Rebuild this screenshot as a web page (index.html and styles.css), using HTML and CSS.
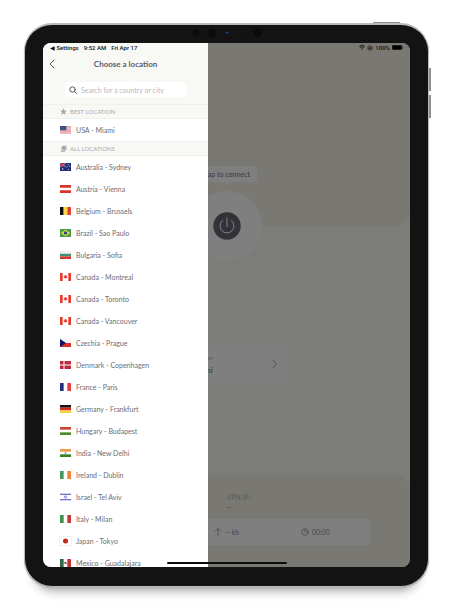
FILE: index.html
```html
<!DOCTYPE html>
<html lang="en">
<head>
<meta charset="utf-8">
<meta name="viewport" content="width=device-width, initial-scale=1">
<title>Choose a location</title>
<link rel="stylesheet" href="styles.css">
</head>
<body>
<div class="device">
  <span class="side-key side-key-top"></span>
  <span class="side-key side-key-up"></span>
  <span class="side-key side-key-down"></span>
  <svg class="cameras" viewBox="0 0 70 10" aria-hidden="true">
    <circle cx="4" cy="5" r="3.500"/><circle cx="19.500" cy="5" r="4.300"/><circle cx="66" cy="5" r="4.300"/>
    <path class="lens" d="M33.500 4h3v1.500h-3z"/><circle cx="50" cy="5" r="1"/>
  </svg>
  <div class="screen">
    <main class="home">
      <section class="hero">
        <p class="bubble">Tap to connect</p>
        <button class="power" aria-label="Connect">
          <svg viewBox="0 0 28 28"><circle class="disc" cx="14" cy="14" r="13.700"/><path d="M14 6v8.500M9.500 8.500a7 7 0 1 0 9 0"/></svg>
        </button>
      </section>
      <section class="middle">
        <button class="current">
          <span class="current-text"><small>Location</small><strong>Miami</strong></span>
          <svg viewBox="0 0 6 10"><path d="M1 1.500l3.500 3.500L1 8.500"/></svg>
        </button>
      </section>
      <section class="summary">
        <dl class="address">
          <dt>VPN IP:</dt>
          <dd>--</dd>
        </dl>
        <div class="stats">
          <span class="upload"><svg viewBox="0 0 8 8"><path d="M4 7.500v-7M1.200 3.200L4 .5l2.800 2.700"/></svg>-- kb</span>
          <span><svg viewBox="0 0 8 8"><circle cx="4" cy="4" r="3.300"/><path d="M4 1.800V4h1.800"/></svg>00:00</span>
        </div>
      </section>
    </main>

    <aside class="drawer">
      <header class="drawer-head">
        <div class="title-row">
          <button class="back" aria-label="Back"><svg viewBox="0 0 6 10"><path d="M5 1L1 5l4 4"/></svg></button>
          <h1>Choose a location</h1>
        </div>
        <label class="search">
          <svg viewBox="0 0 8 8"><circle cx="3.500" cy="3.500" r="2.700"/><path d="M5.500 5.500l2 2"/></svg>
          <input type="search" placeholder="Search for a country or city" aria-label="Search for a country or city">
        </label>
      </header>
      <h2><svg viewBox="0 0 8 8"><path d="M4 .3l1.100 2.500 2.600.3-1.900 1.800.5 2.700L4 6.300 1.700 7.600l.5-2.700L.3 3.100l2.600-.3z"/></svg>Best location</h2>
      <ul>
        <li><button><svg class="flag" viewBox="0 0 33 24"><path fill="#f2dddd" d="M0 0h33v24H0z"/><path stroke="#dd8288" stroke-width="2" d="M0 1h33M0 5h33M0 9h33M0 13h33M0 17h33M0 21h33"/><path fill="#3f507e" d="M0 0h19v13H0z"/></svg>USA - Miami</button></li>
      </ul>
      <h2><svg viewBox="0 0 8 8"><path d="M4.500.6a3 3 0 0 1 1.200 5.200A3 3 0 0 1 1.600 2.200L3 1.500z"/><path class="line" d="M6.500.8a4 4 0 0 1-1 5.700 4 4 0 0 1-4.600-.3M2 7.500h3"/></svg>All locations</h2>
      <ul>
        <li><button><svg class="flag" viewBox="0 0 33 24"><path fill="#202a75" d="M0 0h33v24H0z"/><path stroke="#d9c4d4" stroke-width="2" d="M0 0l17 12M17 0L0 12"/><path stroke="#d94a58" stroke-width="3" d="M8.500 0v12M0 6h17"/><g fill="#fff"><circle cx="8" cy="18" r="2"/><circle cx="25" cy="5" r="1.500"/><circle cx="25" cy="19" r="1.500"/><circle cx="21" cy="11" r="1.500"/><circle cx="29" cy="10" r="1.500"/></g></svg>Australia - Sydney</button></li>
        <li><button><svg class="flag" viewBox="0 0 33 24"><path fill="#fff" d="M0 0h33v24H0z"/><path fill="#d9352b" d="M0 0h33v8H0zM0 16h33v8H0z"/></svg>Austria - Vienna</button></li>
        <li><button><svg class="flag" viewBox="0 0 33 24"><path fill="#111" d="M0 0h11v24H0z"/><path fill="#f9d949" d="M11 0h11v24H11z"/><path fill="#e63a3d" d="M22 0h11v24H22z"/></svg>Belgium - Brussels</button></li>
        <li><button><svg class="flag" viewBox="0 0 33 24"><path fill="#4a9b42" d="M0 0h33v24H0z"/><path fill="#f5dc45" d="M16.500 2L30 12l-13.500 10L3 12z"/><circle fill="#29498c" cx="16.500" cy="12" r="5.500"/></svg>Brazil - Sao Paulo</button></li>
        <li><button><svg class="flag" viewBox="0 0 33 24"><path fill="#f1f1f1" d="M0 0h33v8H0z"/><path fill="#3f9270" d="M0 8h33v8H0z"/><path fill="#c93a2b" d="M0 16h33v8H0z"/></svg>Bulgaria - Sofia</button></li>
        <li><button><svg class="flag" viewBox="0 0 33 24"><path fill="#fff" d="M0 0h33v24H0z"/><path fill="#e8392b" d="M0 0h8v24H0zM25 0h8v24h-8zM16.500 5l2 3 2-.5-.5 3 3 .5-3 4-3 .5v3h-1v-3l-3-.5-3-4 3-.5-.5-3 2 .5z"/></svg>Canada - Montreal</button></li>
        <li><button><svg class="flag" viewBox="0 0 33 24"><path fill="#fff" d="M0 0h33v24H0z"/><path fill="#e8392b" d="M0 0h8v24H0zM25 0h8v24h-8zM16.500 5l2 3 2-.5-.5 3 3 .5-3 4-3 .5v3h-1v-3l-3-.5-3-4 3-.5-.5-3 2 .5z"/></svg>Canada - Toronto</button></li>
        <li><button><svg class="flag" viewBox="0 0 33 24"><path fill="#fff" d="M0 0h33v24H0z"/><path fill="#e8392b" d="M0 0h8v24H0zM25 0h8v24h-8zM16.500 5l2 3 2-.5-.5 3 3 .5-3 4-3 .5v3h-1v-3l-3-.5-3-4 3-.5-.5-3 2 .5z"/></svg>Canada - Vancouver</button></li>
        <li><button><svg class="flag" viewBox="0 0 33 24"><path fill="#f4f4f4" d="M0 0h33v12H0z"/><path fill="#d92e24" d="M0 12h33v12H0z"/><path fill="#12146b" d="M0 0l18 12L0 24z"/></svg>Czechia - Prague</button></li>
        <li><button><svg class="flag" viewBox="0 0 33 24"><path fill="#be2b3e" d="M0 0h33v24H0z"/><path stroke="#fff" stroke-width="3" d="M12 0v24M0 12h33"/></svg>Denmark - Copenhagen</button></li>
        <li><button><svg class="flag" viewBox="0 0 33 24"><path fill="#fff" d="M0 0h33v24H0z"/><path fill="#20327f" d="M0 0h11v24H0z"/><path fill="#e43c41" d="M22 0h11v24H22z"/></svg>France - Paris</button></li>
        <li><button><svg class="flag" viewBox="0 0 33 24"><path fill="#111" d="M0 0h33v8H0z"/><path fill="#d3291c" d="M0 8h33v8H0z"/><path fill="#f7d046" d="M0 16h33v8H0z"/></svg>Germany - Frankfurt</button></li>
        <li><button><svg class="flag" viewBox="0 0 33 24"><path fill="#fff" d="M0 0h33v24H0z"/><path fill="#ca4832" d="M0 0h33v8H0z"/><path fill="#4d8c2b" d="M0 16h33v8H0z"/></svg>Hungary - Budapest</button></li>
        <li><button><svg class="flag" viewBox="0 0 33 24"><path fill="#fff" d="M0 0h33v24H0z"/><path fill="#f29a48" d="M0 0h33v8H0z"/><path fill="#378321" d="M0 16h33v8H0z"/><circle cx="16.500" cy="12" r="3" fill="#9a9ac4"/></svg>India - New Delhi</button></li>
        <li><button><svg class="flag" viewBox="0 0 33 24"><path fill="#fff" d="M0 0h33v24H0z"/><path fill="#479a5b" d="M0 0h11v24H0z"/><path fill="#ee8438" d="M22 0h11v24H22z"/></svg>Ireland - Dublin</button></li>
        <li><button><svg class="flag" viewBox="0 0 33 24"><path fill="#fff" d="M0 0h33v24H0z"/><path fill="#4543cc" d="M0 2h33v3H0zM0 19h33v3H0z"/><path fill="none" stroke="#4543cc" d="M16.500 7l4 7h-8zM16.500 17l4-7h-8z"/></svg>Israel - Tel Aviv</button></li>
        <li><button><svg class="flag" viewBox="0 0 33 24"><path fill="#fff" d="M0 0h33v24H0z"/><path fill="#419150" d="M0 0h11v24H0z"/><path fill="#c2383d" d="M22 0h11v24H22z"/></svg>Italy - Milan</button></li>
        <li><button><svg class="flag framed" viewBox="0 0 33 24"><path fill="#fff" d="M0 0h33v24H0z"/><circle cx="16.500" cy="12" r="7.500" fill="#c1281b"/></svg>Japan - Tokyo</button></li>
        <li><button><svg class="flag" viewBox="0 0 33 24"><path fill="#fff" d="M0 0h33v24H0z"/><path fill="#2d694a" d="M0 0h11v24H0z"/><path fill="#c2303a" d="M22 0h11v24H22z"/><circle cx="16.500" cy="12" r="4" fill="#8f7350"/></svg>Mexico - Guadalajara</button></li>
      </ul>
    </aside>

    <div class="status">
      <span class="status-left"><a href="#">◀ Settings</a><span>9:52 AM</span><span>Fri Apr 17</span></span>
      <span class="status-right">
        <svg class="wifi" viewBox="0 0 12 9"><path d="M6 9L4 6.800a3 3 0 0 1 4 0zM2.800 5.500a4.800 4.800 0 0 1 6.400 0l1-1.200a6.500 6.500 0 0 0-8.400 0zM1 3.500a7.400 7.400 0 0 1 10 0l1-1.200a9 9 0 0 0-12 0z"/></svg>
        <svg class="lock" viewBox="0 0 10 10"><circle cx="5" cy="5" r="3.800"/><path d="M3.500 5h3v2h-3zM4 5V3.500h2V5"/></svg>
        <span>100%</span>
        <svg class="battery" viewBox="0 0 22 10"><rect x=".5" y=".5" width="19" height="9" rx="2"/><path d="M21 3v4"/></svg>
      </span>
    </div>
    <span class="indicator"></span>
  </div>
</div>
</body>
</html>
```
FILE: styles.css
```css
* {
  box-sizing: border-box;
  margin: 0;
  padding: 0;
}

body {
  height: 100vh;
  padding: 23px 24px 24px;
  background: #fff;
  color: #6c6c75;
  font-family: Lato, "Liberation Sans", sans-serif;
  font-size: 7px;
  line-height: 10px;
  overflow: hidden;
}

button,
input {
  border: 0;
  background: none;
  color: inherit;
  font: inherit;
}

svg {
  display: block;
  flex: none;
  fill: none;
  stroke-linecap: round;
}

ul {
  list-style: none;
}

a {
  color: inherit;
  text-decoration: none;
}

/* Tablet body */
.device {
  position: relative;
  height: 100%;
  padding: 18px 18px 19px;
  border: 1px solid #b9bbbd;
  border-top-width: 2px;
  border-radius: 28px;
  background: #131313;
  box-shadow: 0 1px 1px #b4b4b4, 0 14px 12px -12px #888;
}

.side-key {
  position: absolute;
  right: -3px;
  width: 2px;
  height: 23px;
  background: #8d8f91;
}

.side-key-top {
  top: -3px;
  right: 28px;
  width: 27px;
  height: 1px;
}

.side-key-up {
  top: 43px;
}

.side-key-down {
  top: 70px;
}

.cameras {
  position: absolute;
  top: 3px;
  left: 50%;
  width: 70px;
  height: 10px;
  margin-left: -35px;
  fill: #0b0b0b;
}

.lens {
  fill: #1d4480;
}

.screen {
  position: relative;
  display: grid;
  grid-template: 100% / 100%;
  height: 100%;
  border-radius: 8px;
  background: #7c7c79;
  overflow: hidden;
}

.home,
.drawer {
  grid-area: 1 / 1;
}

/* Dimmed home view */
.home {
  display: flex;
  flex-direction: column;
  color: #48484a;
}

.hero {
  display: flex;
  flex: 0 0 35%;
  flex-direction: column;
  align-items: center;
  justify-content: flex-end;
  gap: 9px;
  border-radius: 0 0 16px 16px;
  background: #7a7872;
}

.bubble {
  position: relative;
  padding: 3px 8px;
  width: 60px;
  border-radius: 2px;
  background: #7f7f7f;
  color: #39393b;
  text-align: center;
  white-space: nowrap;
}

.bubble::after {
  content: "";
  position: absolute;
  top: 100%;
  left: 50%;
  margin-left: -3px;
  border: 3px solid transparent;
  border-top-color: #7f7f7f;
}

.power {
  position: relative;
  display: grid;
  flex: none;
  place-items: center;
  width: 70px;
  height: 70px;
  margin-bottom: -35px;
  border-radius: 50%;
  background: #7f7f7f;
}

.power svg {
  width: 28px;
  height: 28px;
  stroke: #828286;
}

.power .disc {
  fill: #333238;
  stroke: none;
}

.middle {
  display: flex;
  flex: 1;
  align-items: center;
  justify-content: center;
  padding-top: 26px;
}

.current {
  display: flex;
  align-items: center;
  justify-content: space-between;
  width: 33%;
  min-width: 122px;
  height: 39px;
  padding: 0 10px 0 25px;
  border-radius: 2px;
  background: #7f7f7f;
  text-align: left;
}

.current-text {
  display: grid;
  gap: 2px;
}

.current small {
  color: #606062;
  font-size: 6px;
}

.current strong {
  font-size: 8px;
}

.current svg {
  width: 6px;
  height: 10px;
  stroke: #505052;
}

.summary {
  padding: 17px 11% 22px;
  border-radius: 16px 16px 0 0;
  background: #7a7872;
}

.address {
  padding: 0 0 7px 50%;
}

.address dt {
  color: #5c5b5a;
}

.stats {
  display: grid;
  grid-template-columns: 1fr 1fr 1fr;
  height: 26px;
  padding: 0 10px;
  border-radius: 4px;
  background: #7f7f7f;
}

.stats span {
  display: flex;
  align-items: center;
  justify-content: center;
  gap: 3px;
}

.stats .upload {
  grid-column: 2;
}

.stats svg {
  width: 8px;
  height: 8px;
  stroke: #555557;
  stroke-width: 1;
}

/* Location drawer */
.drawer {
  z-index: 1;
  width: 45%;
  min-width: 164px;
  background: #fff;
  overflow: hidden;
}

.drawer-head {
  height: 61px;
  padding: 14px 22px 0 6px;
  background: #f8f9f5;
}

.title-row {
  display: grid;
  grid-template-columns: 16px 1fr;
  align-items: center;
  height: 14px;
}

.title-row h1 {
  color: #5c5c66;
  font-size: 8px;
  font-weight: 700;
  text-align: center;
}

.back {
  width: 6px;
  height: 10px;
}

.back svg {
  width: 6px;
  height: 10px;
  stroke: #55555d;
}

.search {
  display: flex;
  align-items: center;
  gap: 4px;
  height: 15px;
  margin: 11px 0 0 16px;
  padding: 0 4px;
  border-radius: 4px;
  background: #fff;
}

.search svg {
  width: 8px;
  height: 8px;
  stroke: #55555d;
}

.search input {
  width: 100%;
  min-width: 0;
  outline: 0;
}

.search input::placeholder {
  color: #b8b8bc;
}

.drawer h2 {
  display: flex;
  align-items: center;
  gap: 3px;
  height: 15px;
  padding-left: 17px;
  border: solid #f0f0ed;
  border-width: 1px 0;
  background: #f8f9f5;
  color: #a7a7aa;
  font-size: 6px;
  font-weight: 400;
  text-transform: uppercase;
}

.drawer h2 svg {
  width: 7px;
  height: 7px;
  fill: #a7a7aa;
}

.drawer h2 .line {
  fill: none;
  stroke: #a7a7aa;
}

.drawer li button {
  display: flex;
  align-items: center;
  gap: 5px;
  width: 100%;
  height: 22px;
  padding-left: 17px;
}

.flag {
  width: 11px;
  height: 8px;
  stroke-linecap: butt;
}

.framed {
  outline: 1px solid #eee;
}

/* System overlays */
.status {
  position: absolute;
  inset: 0 7px auto 7px;
  z-index: 2;
  display: flex;
  justify-content: space-between;
  height: 9px;
  color: #111;
  font-family: Roboto, sans-serif;
  font-size: 6px;
  font-weight: 500;
  line-height: 9px;
}

.status-left,
.status-right {
  display: flex;
  align-items: center;
}

.status-left {
  gap: 5px;
}

.status-right {
  gap: 2px;
}

.wifi {
  width: 6px;
  height: 5px;
  fill: #111;
}

.lock {
  width: 6px;
  height: 6px;
  stroke: #222;
}

.battery {
  width: 11px;
  height: 5px;
  fill: #000;
  stroke: #222;
}

.indicator {
  position: absolute;
  bottom: 3px;
  left: 50%;
  z-index: 2;
  width: 120px;
  height: 2px;
  margin-left: -60px;
  border-radius: 1px;
  background: #0c0c0e;
}
```
